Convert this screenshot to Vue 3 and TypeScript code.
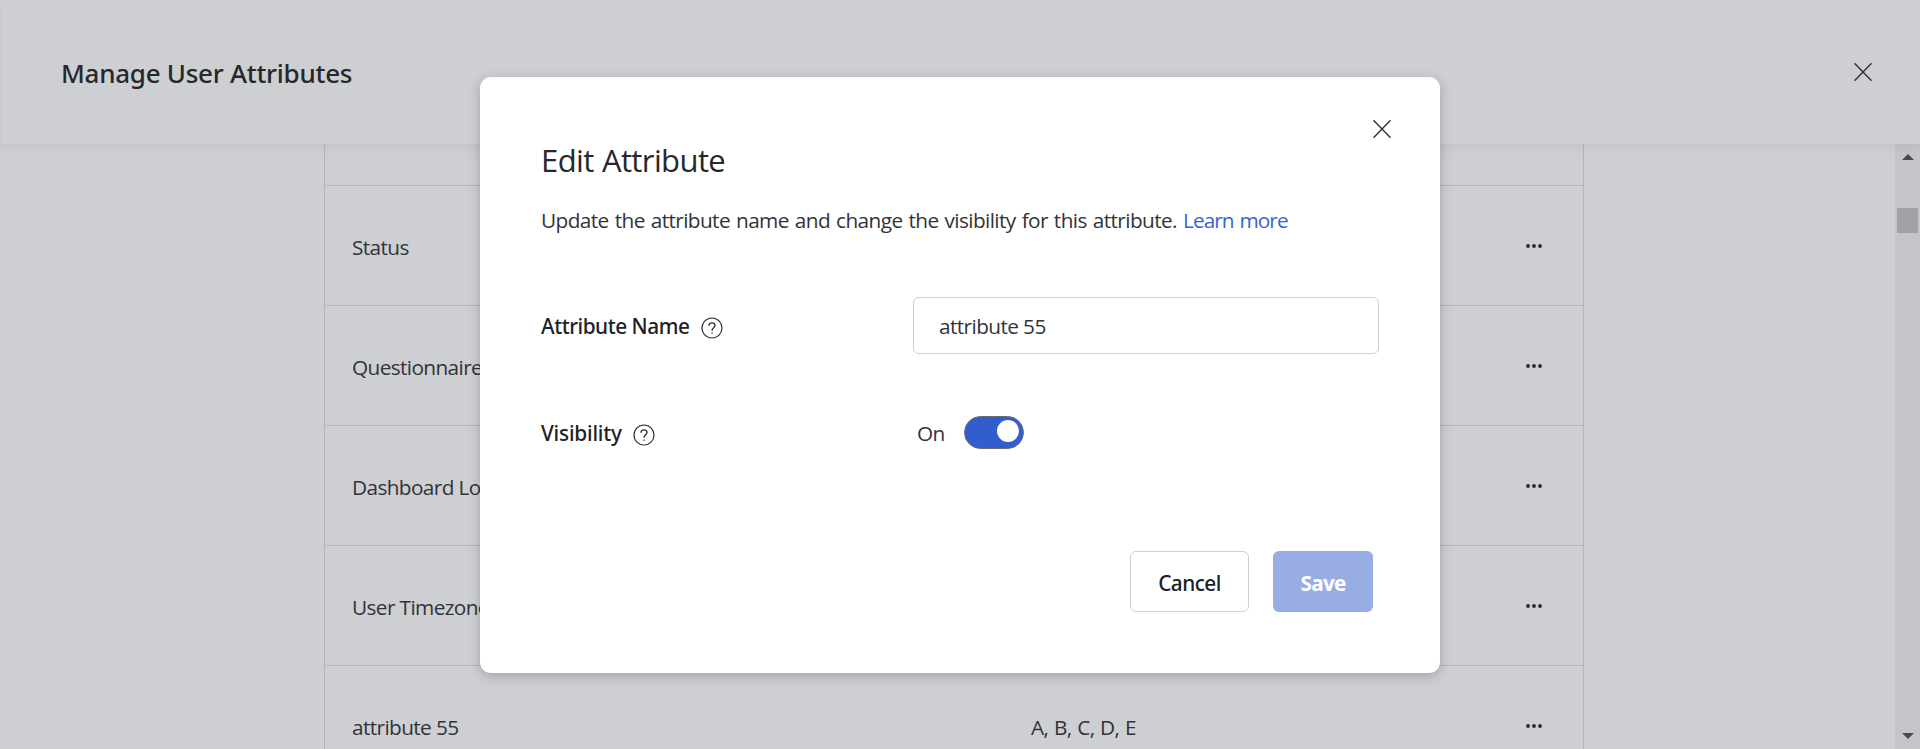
<script setup lang="ts">
import { ref } from 'vue'

interface AttributeRow {
  name: string
  values: string
}

const rows: AttributeRow[] = [
  { name: 'Status', values: '' },
  { name: 'Questionnaire', values: '' },
  { name: 'Dashboard Logo', values: '' },
  { name: 'User Timezone', values: '' },
  { name: 'attribute 55', values: 'A, B, C, D, E' },
]

const attributeName = ref('attribute 55')
const visible = ref(true)
</script>

<template>
  <div class="page">
    <header class="header">
      <h1>Manage User Attributes</h1>
      <svg class="close" viewBox="0 0 18 18"><path d="M0.5 0.3 17.5 17.7M17.5 0.3 0.5 17.7" /></svg>
    </header>

    <div class="body">
      <div class="table">
        <div class="row row-partial"></div>
        <div v-for="row in rows" :key="row.name" class="row">
          <span class="name">{{ row.name }}</span>
          <span class="values">{{ row.values }}</span>
          <svg class="dots" viewBox="0 0 16 4">
            <circle cx="2" cy="2" r="1.9" /><circle cx="8" cy="2" r="1.9" /><circle cx="14" cy="2" r="1.9" />
          </svg>
        </div>
      </div>
      <div class="scrollbar">
        <svg class="arrow" viewBox="0 0 12 6"><path d="M0 6 6 0 12 6Z" /></svg>
        <div class="thumb"></div>
        <svg class="arrow down" viewBox="0 0 12 6"><path d="M0 0H12L6 6Z" /></svg>
      </div>
    </div>

    <div class="overlay">
      <div class="modal">
        <svg class="close modal-close" viewBox="0 0 18 18"><path d="M0.5 0.3 17.5 17.7M17.5 0.3 0.5 17.7" /></svg>
        <h2>Edit Attribute</h2>
        <p class="description">
          Update the attribute name and change the visibility for this attribute.
          <a class="link">Learn more</a>
        </p>

        <div class="field field-name">
          <span class="label">Attribute Name</span>
          <svg class="help" viewBox="0 0 22 22">
            <circle cx="11" cy="11" r="10" />
            <path d="M8 8.7C8 6.9 9.3 5.9 11 5.9S14 7 14 8.6C14 10.6 11.1 10.8 11.1 13.2V13.8" />
            <path d="M11.1 15.4V16.8" />
          </svg>
          <input v-model="attributeName" class="input" type="text" />
        </div>

        <div class="field field-visibility">
          <span class="label">Visibility</span>
          <svg class="help" viewBox="0 0 22 22">
            <circle cx="11" cy="11" r="10" />
            <path d="M8 8.7C8 6.9 9.3 5.9 11 5.9S14 7 14 8.6C14 10.6 11.1 10.8 11.1 13.2V13.8" />
            <path d="M11.1 15.4V16.8" />
          </svg>
          <div class="switch">
            <span class="state">{{ visible ? 'On' : 'Off' }}</span>
            <button class="toggle" :class="{ on: visible }" @click="visible = !visible"><i class="knob"></i></button>
          </div>
        </div>

        <div class="actions">
          <button class="button cancel">Cancel</button>
          <button class="button save">Save</button>
        </div>
      </div>
    </div>
  </div>
</template>

<style>
body {
  overflow: hidden;
}
</style>

<style scoped>
* {
  box-sizing: border-box;
}
.page {
  display: flex;
  flex-direction: column;
  height: 749px;
  overflow: hidden;
  background: #cecfd3;
  color: #323338;
  font-family: "Open Sans", "Noto Sans", sans-serif;
  font-size: 20.8px;
  line-height: 30px;
  letter-spacing: -0.6px;
  word-spacing: 0.8px;
}
.header {
  display: flex;
  flex: none;
  align-items: center;
  justify-content: space-between;
  height: 144px;
  margin-left: 1px;
  padding: 0 48px 0 60px;
  background: #cecfd3;
  box-shadow: 0 3px 12px rgba(0, 0, 0, 0.06);
  position: relative;
  z-index: 1;
}
h1 {
  margin: 0;
  padding-top: 2px;
  font-family: "Noto Sans", sans-serif;
  font-size: 26px;
  font-weight: 500;
  line-height: 36px;
  letter-spacing: -0.27px;
  word-spacing: 0;
  color: #26282b;
}
.close {
  width: 18px;
  height: 18px;
  fill: none;
  stroke: #2b2c30;
  stroke-width: 1.4;
}
.body {
  display: flex;
  flex: 1;
  min-height: 0;
}
.table {
  width: 1260px;
  height: 700px;
  margin-left: 324px;
  border: solid #b5b6ba;
  border-width: 0 1px;
}
.row {
  display: grid;
  grid-template-columns: 679px 495px 16px;
  align-items: center;
  height: 120px;
  padding-left: 27px;
  border-bottom: 1px solid #b5b6ba;
}
.row-partial {
  height: 42px;
}
.name,
.values {
  padding-top: 3px;
}
.name {
  white-space: nowrap;
  letter-spacing: -0.62px;
  word-spacing: 0;
}
.values {
  letter-spacing: -0.6px;
}
.dots {
  width: 16px;
  height: 4px;
  fill: #26282b;
}
.scrollbar {
  display: flex;
  flex-direction: column;
  align-items: center;
  width: 25px;
  margin-left: auto;
  padding: 10px 0;
  background: #c4c5c9;
}
.arrow {
  width: 12px;
  height: 6px;
  fill: #48494d;
}
.down {
  margin-top: auto;
}
.thumb {
  width: 21px;
  height: 25px;
  margin-top: 48px;
  background: #a0a1a5;
}
.overlay {
  position: absolute;
  inset: 0;
  z-index: 2;
  display: flex;
  align-items: flex-start;
  justify-content: center;
  height: 749px;
  padding-top: 77px;
}
.modal {
  position: relative;
  width: 960px;
  height: 595.5px;
  padding: 63px 61px 0;
  border-radius: 11px;
  background: #fff;
  box-shadow: 0 3px 12px rgba(0, 0, 0, 0.22);
}
.modal-close {
  position: absolute;
  top: 42.5px;
  right: 49px;
}
h2 {
  margin: 0 0 25px;
  font-size: 31px;
  font-weight: 400;
  line-height: 40px;
  letter-spacing: -0.6px;
  color: #26282b;
}
.description {
  margin: 0;
  white-space: nowrap;
  word-spacing: 1.2px;
}
.link {
  color: #3a62d7;
  letter-spacing: -0.92px;
}
.field {
  display: flex;
  align-items: center;
  margin-top: 62px;
}
.field-name {
  height: 57px;
}
.field-visibility {
  height: 33px;
}
.label {
  font-family: "Noto Sans", sans-serif;
  font-weight: 500;
  letter-spacing: -0.46px;
  word-spacing: 0;
  color: #202124;
}
.field-visibility .label {
  padding-top: 1px;
  letter-spacing: -0.2px;
}
.help {
  width: 22px;
  height: 22px;
  margin: 5px 0 0 11.5px;
  fill: none;
  stroke: #323338;
  stroke-width: 1.2;
}
.help path {
  stroke-width: 1.4;
}
.input {
  width: 466px;
  height: 57px;
  margin-left: auto;
  padding: 0 24px 0 25px;
  border: 1px solid #cfcfd1;
  border-radius: 6px;
  outline: 0;
  background: #fff;
  color: #323338;
  font: inherit;
  letter-spacing: -0.6px;
}
.switch {
  display: flex;
  align-items: center;
  width: 462px;
  margin-left: auto;
}
.state {
  width: 47px;
}
.toggle {
  display: flex;
  width: 60px;
  height: 33px;
  padding: 3px 4.5px 0;
  border: 1px solid #6b6b70;
  border-radius: 17px;
  background: #8a8b90;
}
.toggle.on {
  justify-content: flex-end;
  background: #325dcd;
}
.knob {
  width: 22px;
  height: 22px;
  border-radius: 50%;
  background: #fff;
}
.actions {
  display: flex;
  justify-content: flex-end;
  gap: 24px;
  margin: 102px 6px 0 0;
}
.button {
  height: 61px;
  padding: 3px 0 0;
  border: 0;
  border-radius: 6px;
  font: inherit;
}
.cancel {
  width: 119px;
  border: 1px solid #cfcfd1;
  background: #fff;
  color: #202124;
  font-family: "Noto Sans", sans-serif;
  font-weight: 500;
  letter-spacing: -0.55px;
}
.save {
  width: 100px;
  background: #99ade5;
  color: #fff;
  font-weight: 700;
  letter-spacing: -0.8px;
}
</style>
